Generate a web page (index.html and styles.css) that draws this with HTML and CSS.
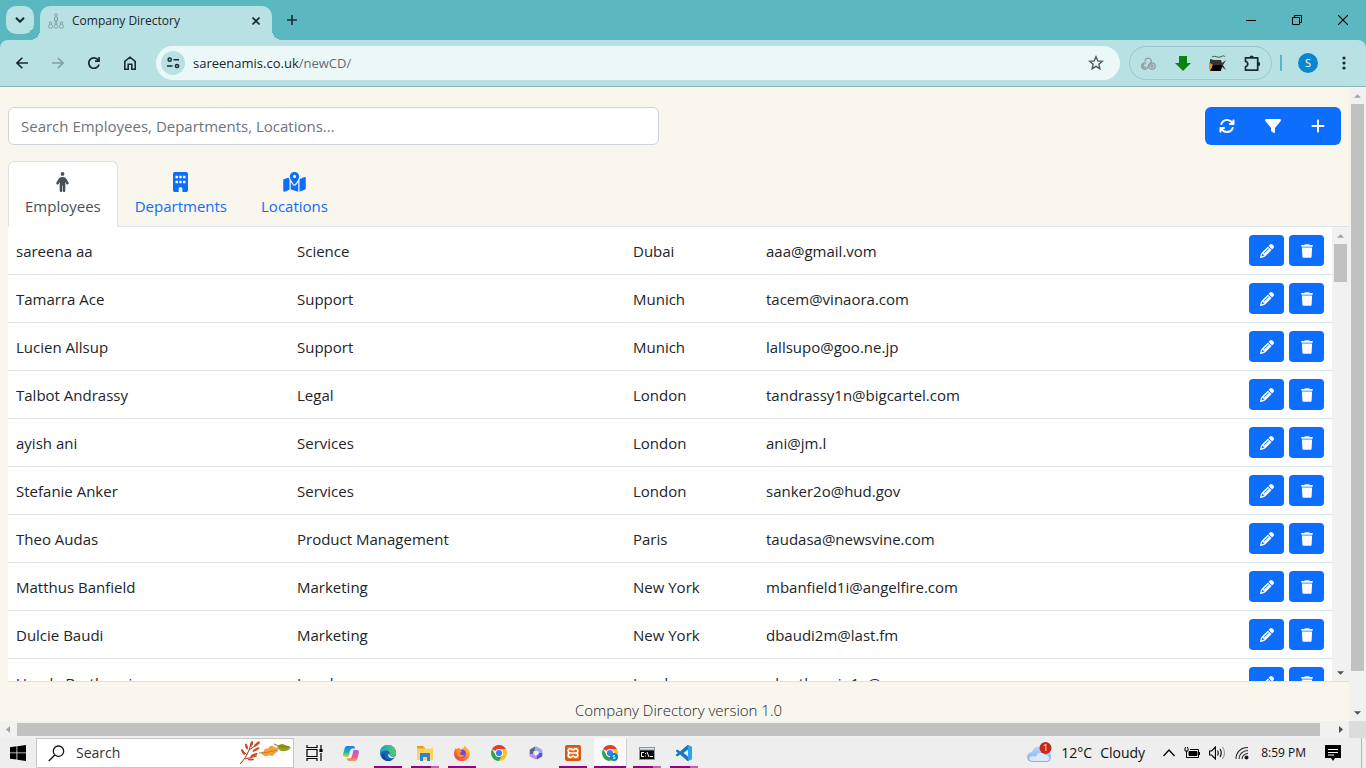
FILE: index.html
```
<!DOCTYPE html>
<html lang="en">
<head>
    <meta charset="UTF-8">
    <meta name="viewport" content="width=device-width, initial-scale=1.0">
    <title>Company Directory</title>
    <link rel="stylesheet" href="styles.css">
</head>
<body>
    <!-- Icons used more than once -->
    <svg class="sprite" width="0" height="0" aria-hidden="true">
        <symbol id="icon-pencil" viewBox="0 0 512 512"><path d="M410.3 231l11.3-11.3-33.9-33.9-62.1-62.1L291.7 89.8l-11.3 11.3-22.6 22.6L58.6 322.9c-10.4 10.4-18 23.3-22.2 37.4L1 480.7c-2.5 8.4-.2 17.5 6.1 23.7s15.3 8.5 23.7 6.1l120.3-35.4c14.1-4.2 27-11.8 37.4-22.2L387.7 253.7 410.3 231zM160 399.4l-9.1 22.7c-4 3.1-8.5 5.4-13.3 6.9L59.4 452l23-78.1c1.4-4.9 3.8-9.4 6.9-13.3l22.7-9.1v32c0 8.8 7.2 16 16 16h32zM362.7 18.7L348.3 33.2 325.7 55.8 314.3 67.1l33.9 33.9 62.1 62.1 33.9 33.9 11.3-11.3 22.6-22.6 14.5-14.5c25-25 25-65.5 0-90.5L453.3 18.7c-25-25-65.5-25-90.5 0zm-47.4 168l-144 144c-6.2 6.2-16.4 6.2-22.6 0s-6.2-16.4 0-22.6l144-144c6.2-6.2 16.4-6.2 22.6 0s6.2 16.4 0 22.6z"/></symbol>
        <symbol id="icon-trash" viewBox="0 0 448 512"><path d="M135.2 17.7L128 32H32C14.3 32 0 46.3 0 64S14.3 96 32 96H416c17.7 0 32-14.3 32-32s-14.3-32-32-32H320l-7.2-14.3C307.4 6.8 296.3 0 284.2 0H163.8c-12.1 0-23.2 6.8-28.6 17.7zM416 128H32L53.2 467c1.6 25.3 22.6 45 47.9 45H346.9c25.3 0 46.3-19.7 47.9-45L416 128z"/></symbol>
        <symbol id="icon-chrome" viewBox="0 0 16 16">
            <path fill="#e33b2e" d="M8 8 1.1 4A8 8 0 0 1 14.9 4L8 4z"/>
            <path fill="#fcc21c" d="M8 4h6.9A8 8 0 0 1 8 16l3.5-6z"/>
            <path fill="#2da44e" d="M1.1 4 4.5 10 8 12l3.5-2L8 16A8 8 0 0 1 1.1 4z"/>
            <circle cx="8" cy="8" r="4" fill="#fff"/><circle cx="8" cy="8" r="3.1" fill="#3b7ded"/>
        </symbol>
        <symbol id="icon-up" viewBox="0 0 8 4"><path d="M0 4 4 0l4 4z"/></symbol>
        <symbol id="icon-down" viewBox="0 0 8 4"><path d="M0 0l4 4 4-4z"/></symbol>
    </svg>

    <header class="titlebar">
        <button class="tab-search" aria-label="Search tabs"><svg width="10" height="6" viewBox="0 0 10 6" fill="none" stroke="#1b2b2d" stroke-width="2"><path d="M1 .8l4 4 4-4"/></svg></button>
        <div class="browser-tab">
            <svg width="16" height="16" viewBox="0 0 16 16" fill="none" stroke="#82a0a3" stroke-width="1">
                <circle cx="8" cy="1.8" r="1.3"/><path d="M6.5 4h3v3.500h-3z"/>
                <circle cx="2.500" cy="9.800" r="1.200"/><circle cx="8" cy="9.800" r="1.200"/><circle cx="13.500" cy="9.800" r="1.200"/>
                <circle cx="2.500" cy="13.300" r="2"/><circle cx="8" cy="13.300" r="2"/><circle cx="13.500" cy="13.300" r="2"/>
            </svg>
            <span class="browser-tab-title">Company Directory</span>
            <button class="plain-btn tab-close" aria-label="Close tab"><svg width="8" height="8" viewBox="0 0 8 8" stroke="#1b2b2d" stroke-width="1.600"><path d="M.5.5l7 7M7.500.5l-7 7"/></svg></button>
        </div>
        <button class="plain-btn new-tab" aria-label="New tab"><svg width="10" height="10" viewBox="0 0 10 10" stroke="#1b2b2d" stroke-width="1.600"><path d="M5 0v10M0 5h10"/></svg></button>
        <div class="window-controls">
            <button class="plain-btn" aria-label="Minimize"><svg width="10" height="10" viewBox="0 0 10 10" stroke="#000"><path d="M0 5.500h10"/></svg></button>
            <button class="plain-btn" aria-label="Restore"><svg width="10" height="10" viewBox="0 0 10 10" fill="none" stroke="#000"><path d="M.5 2.500h7v7h-7zM2.500 2.500v-2h7v7h-2"/></svg></button>
            <button class="plain-btn" aria-label="Close"><svg width="10" height="10" viewBox="0 0 10 10" stroke="#000" stroke-width="1.100"><path d="M0 0l10 10M10 0L0 10"/></svg></button>
        </div>
    </header>

    <nav class="toolbar">
        <div class="nav-buttons">
            <button class="plain-btn" aria-label="Back"><svg width="12" height="12" viewBox="0 0 12 12" fill="none" stroke="#1b2b2d" stroke-width="1.600"><path d="M12 6H1M6.300.700L1 6l5.300 5.300"/></svg></button>
            <button class="plain-btn" aria-label="Forward"><svg width="12" height="12" viewBox="0 0 12 12" fill="none" stroke="#82a0a3" stroke-width="1.600"><path d="M0 6h11M5.700.700L11 6l-5.300 5.300"/></svg></button>
            <button class="plain-btn" aria-label="Reload"><svg width="12" height="12" viewBox="0 0 12 12" fill="none" stroke="#1b2b2d" stroke-width="1.700"><path d="M11 7.500A5.200 5.200 0 1 1 10.200 3M11.100 0v4.200H7"/></svg></button>
            <button class="plain-btn" aria-label="Home"><svg width="14" height="14" viewBox="0 0 14 14" fill="none" stroke="#1b2b2d" stroke-width="1.600"><path d="M1.800 5.300 7 1.200l5.200 4.100v7.900H8.800V8.300H5.200v4.900H1.800z"/></svg></button>
        </div>
        <div class="address-bar">
            <button class="site-info" aria-label="Site information"><svg width="13" height="12" viewBox="0 0 13 12" fill="none" stroke="#1b2b2d" stroke-width="1.500"><circle cx="2.700" cy="2.700" r="1.600"/><path d="M6.500 2.700H12M0 9h5.500"/><circle cx="10" cy="9" r="1.600"/></svg></button>
            <div class="address">sareenamis.co.uk<span class="address-path">/newCD/</span></div>
            <button class="plain-btn bookmark" aria-label="Bookmark this tab"><svg width="16" height="16" viewBox="0 0 16 16" fill="none" stroke="#4c5a5c" stroke-width="1.400"><path d="M8 1.800l1.800 4.100 4.500.4-3.400 3 1 4.400L8 11.400l-3.900 2.300 1-4.400-3.400-3 4.500-.4z"/></svg></button>
        </div>
        <div class="extensions">
            <button class="plain-btn" aria-label="Cloud extension"><svg width="16" height="13" viewBox="0 0 16 13" fill="none" stroke="#929b9d" stroke-width="1.300"><path d="M5 4.500a3.200 3.200 0 1 1 5.500 2L8 9.500"/><path d="M8 9.500a3.200 3.200 0 1 1-1.500-3.200M4.500 7.500a1.500 1.500 0 1 0 1.500 2"/><circle cx="12" cy="9" r="3.200"/><circle cx="12" cy="9" r="1"/></svg></button>
            <button class="plain-btn" aria-label="Download extension"><svg width="16" height="15" viewBox="0 0 16 15" fill="#0c8010"><path d="M4 0h8v7h4l-8 8-8-8h4z"/></svg></button>
            <button class="plain-btn" aria-label="Cat extension"><svg width="17" height="17" viewBox="0 0 17 17"><path fill="#f38a1b" d="M0 7l4 3-3 6-1-2z"/><path fill="#333" d="M1 4l4 1h7l1 3 4-3-3 5 3 5-4-3-1 2H3l1-4-3-2z"/><path fill="#000" d="M4 10h9l-1 6H1z"/><path fill="none" stroke="#555" d="M3 2c3-2 5 1 8 0s4-2 5 0"/></svg></button>
            <button class="plain-btn" aria-label="Extensions"><svg width="17" height="17" viewBox="0 0 17 17"><path fill="none" stroke="#1b2b2d" stroke-width="1.700" stroke-linejoin="round" d="M1.500 2.800h12.200v12.400H1.500v-3.400c3-.6 3-4.800 0-5.400z"/><path fill="#1b2b2d" d="M5.500 2.500a2.100 2.100 0 0 1 4.200 0zM14 6.800a2.200 2.200 0 0 1 0 4.400z"/></svg></button>
        </div>
        <span class="toolbar-divider"></span>
        <button class="profile" aria-label="Profile">S</button>
        <button class="plain-btn more" aria-label="More"><svg width="4" height="14" viewBox="0 0 4 14" fill="#1b2b2d"><circle cx="2" cy="2" r="1.600"/><circle cx="2" cy="7" r="1.600"/><circle cx="2" cy="12" r="1.600"/></svg></button>
    </nav>

    <div class="viewport">
        <main class="page">
            <div class="app-header">
                <input type="text" class="search-input" aria-label="Search directory" placeholder="Search Employees, Departments, Locations...">
                <div class="btn-group">
                    <button class="btn" aria-label="Refresh"><svg width="16" height="16" viewBox="0 0 512 512"><path d="M105.1 202.6c7.7-21.8 20.2-42.3 37.8-59.8c62.5-62.5 163.8-62.5 226.300 0L386.300 160H352c-17.700 0-32 14.300-32 32s14.300 32 32 32H463.900c17.700 0 32-14.300 32-32V80c0-17.700-14.300-32-32-32s-32 14.300-32 32v35.200L414.400 97.600c-87.500-87.500-229.300-87.500-316.800 0C73.200 122 55.600 150.700 44.800 181.400c-5.900 16.700 2.900 34.900 19.500 40.800s34.900-2.900 40.800-19.500zM39 289.300c-5 1.500-9.800 4.200-13.700 8.200c-4 4-6.700 8.800-8.100 14c-.3 1.200-.6 2.500-.8 3.800c-.3 1.700-.4 3.400-.4 5.100V432c0 17.700 14.300 32 32 32s32-14.300 32-32V396.900l17.600 17.500c87.500 87.400 229.300 87.400 316.700 0c24.400-24.400 42.100-53.100 52.900-83.700c5.900-16.700-2.900-34.900-19.500-40.800s-34.900 2.900-40.800 19.500c-7.700 21.800-20.200 42.300-37.800 59.800c-62.500 62.500-163.800 62.500-226.300 0L125.600 352H160c17.700 0 32-14.300 32-32s-14.300-32-32-32H48.400c-1.600 0-3.200.1-4.800.3s-3.100.5-4.600 1z"/></svg></button>
                    <button class="btn" aria-label="Filter"><svg width="16" height="16" viewBox="0 0 512 512"><path d="M3.900 54.900C10.500 40.900 24.500 32 40 32H472c15.500 0 29.500 8.900 36.100 22.900s4.600 30.500-5.200 42.500L320 320.900V448c0 12.100-6.800 23.200-17.700 28.600s-23.800 4.300-33.500-3l-64-48c-8.100-6-12.800-15.500-12.800-25.600V320.900L9 97.300C-.7 85.400-2.800 68.800 3.900 54.900z"/></svg></button>
                    <button class="btn" aria-label="Add"><svg width="14" height="16" viewBox="0 0 448 512"><path d="M256 80c0-17.700-14.300-32-32-32s-32 14.300-32 32V224H48c-17.700 0-32 14.300-32 32s14.300 32 32 32H192V432c0 17.700 14.300 32 32 32s32-14.300 32-32V288H400c17.700 0 32-14.300 32-32s-14.300-32-32-32H256V80z"/></svg></button>
                </div>
            </div>

            <div class="tabs" role="tablist">
                <button class="tab active" role="tab" aria-selected="true">
                    <svg width="13" height="20" viewBox="0 0 320 512"><path d="M112 48a48 48 0 1 1 96 0 48 48 0 1 1 -96 0zm40 304V480c0 17.700-14.300 32-32 32s-32-14.300-32-32V256.900L59.400 304.500c-9.100 15.100-28.800 20-43.900 10.900s-20-28.800-10.900-43.900l58.300-97c17.400-28.900 48.600-46.600 82.300-46.600h29.700c33.700 0 64.900 17.700 82.300 46.600l58.300 97c9.100 15.100 4.200 34.800-10.900 43.900s-34.800 4.200-43.900-10.900L232 256.900V480c0 17.700-14.300 32-32 32s-32-14.300-32-32V352H152z"/></svg>
                    <span>Employees</span>
                </button>
                <button class="tab" role="tab" aria-selected="false">
                    <svg width="15" height="20" viewBox="0 0 384 512"><path fill-rule="evenodd" d="M48 0C21.500 0 0 21.500 0 48V464c0 26.500 21.500 48 48 48h96V432c0-26.500 21.500-48 48-48s48 21.500 48 48v80h96c26.500 0 48-21.500 48-48V48c0-26.500-21.500-48-48-48H48zM64 96h64v64H64zM160 96h64v64h-64zM256 96h64v64h-64zM64 224h64v64H64zM160 224h64v64h-64zM256 224h64v64h-64z"/></svg>
                    <span>Departments</span>
                </button>
                <button class="tab" role="tab" aria-selected="false">
                    <svg width="23" height="20" viewBox="0 0 576 512"><path d="M408 120c0 54.600-73.100 151.900-105.200 192c-7.700 9.600-22 9.600-29.600 0C241.100 271.900 168 174.600 168 120C168 53.700 221.700 0 288 0s120 53.700 120 120zm8 80.400c3.500-6.900 6.700-13.800 9.600-20.600c.5-1.200 1-2.500 1.500-3.700l116-46.400C558.900 123.400 576 135 576 152V422.800c0 9.800-6 18.600-15.100 22.300L416 503V200.400zM137.600 138.300c2.400 14.100 7.200 28.300 12.800 41.500c2.900 6.800 6.100 13.700 9.600 20.600V451.800L32.900 502.700C17.100 509 0 497.400 0 480.400V209.600c0-9.800 6-18.600 15.100-22.300l122.600-49zM327.800 332c13.900-17.400 35.700-45.700 56.200-77V504.300L192 449.400V255c20.500 31.300 42.300 59.600 56.200 77c20.500 25.600 59.100 25.600 79.600 0zM288 152a40 40 0 1 0 0-80 40 40 0 1 0 0 80z"/></svg>
                    <span>Locations</span>
                </button>
            </div>

            <div class="table-wrap">
                <div class="table-scroll">
                    <table class="directory">
                        <colgroup><col class="col-name"><col class="col-department"><col class="col-location"><col><col class="col-actions"></colgroup>
                        <tbody id="employees"></tbody>
                    </table>
                </div>
                <div class="scrollbar">
                    <svg class="muted" width="7" height="4"><use href="#icon-up"/></svg>
                    <div class="thumb thumb-small"></div>
                    <svg class="scroll-end" width="7" height="4"><use href="#icon-down"/></svg>
                </div>
            </div>

            <footer class="app-footer">Company Directory version 1.0</footer>
        </main>
        <div class="scrollbar">
            <svg class="muted" width="7" height="4"><use href="#icon-up"/></svg>
            <div class="thumb thumb-tall"></div>
            <svg class="scroll-end" width="7" height="4"><use href="#icon-down"/></svg>
        </div>
    </div>

    <div class="scrollbar-row">
        <div class="scrollbar-x">
            <svg class="muted" width="4" height="7" viewBox="0 0 4 7"><path d="M4 0v7L0 3.500z"/></svg>
            <div class="thumb-x"></div>
            <svg width="4" height="7" viewBox="0 0 4 7"><path d="M0 0v7l4-3.500z"/></svg>
        </div>
        <div class="scroll-corner"></div>
    </div>

    <footer class="taskbar">
        <button class="plain-btn start" aria-label="Start"><svg width="16" height="16" viewBox="0 0 16 16"><path d="M0 2.200 6.500 1.300v6.200H0zM7.300 1.200 16 0v7.500H7.300zM0 8.300h6.500v6.300L0 13.700zM7.300 8.300H16V16l-8.700-1.300z"/></svg></button>
        <label class="task-search">
            <svg width="17" height="17" viewBox="0 0 17 17" fill="none" stroke="#111" stroke-width="1.300"><circle cx="10.500" cy="6.200" r="5.200"/><path d="M6.800 10 .8 16"/></svg>
            <input type="text" placeholder="Search" aria-label="Search Windows">
            <svg width="52" height="24" viewBox="0 0 52 24">
                <path d="M0 23C5 18 9 11 11 3M5 18l12-3M7 14 2 9M9 9l9-6" fill="none" stroke="#a7391c"/>
                <g fill="#cf4b1e"><ellipse cx="11.500" cy="3" rx="1.400" ry="3" transform="rotate(15 11.500 3)"/><ellipse cx="17" cy="3" rx="3.600" ry="1.400" transform="rotate(-40 17 3)"/><ellipse cx="16" cy="8.500" rx="4" ry="1.200" transform="rotate(-30 16 8.500)"/><ellipse cx="14" cy="14" rx="4" ry="1.200" transform="rotate(-20 14 14)"/><ellipse cx="6.500" cy="5.500" rx="1.200" ry="3.200" transform="rotate(-20 6.500 5.500)"/><ellipse cx="3" cy="11" rx="1.200" ry="3.200" transform="rotate(-30 3 11)"/><ellipse cx="11" cy="18.500" rx="3.200" ry="1.100"/></g>
                <path fill="#f2a03a" d="M21 12c1-2 3-1 3-2 0-2 2-3 4-2 1-3 3-4 5-3 1 2 4 1 6 3-2 0-1 2-1 3-2-1-2 2-4 2-1 3-3 2-5 1-2 2-5 2-8-2z"/><path stroke="#cf7f22" d="M19 12c6 0 11-1 18-3" fill="none"/>
                <path fill="#9a9c1c" d="M37 6c4-4 6-3 8-2l6 2c-2 3-4 4-6 4-4 1-6-1-8-4z"/><path stroke="#747a10" d="M34 3c4 2 9 3 15 3" fill="none"/>
            </svg>
        </label>
        <div class="task-apps">
            <button class="task-app" aria-label="Task view"><svg width="17" height="16" viewBox="0 0 17 16" fill="none" stroke="#000" stroke-width="1.200"><path d="M1 0v2.500h10V0M1 16v-2.500h10V16M1 4.500h10v7H1zM15 0v4M15 8v8"/><path fill="#000" d="M14 4.500h2v2h-2z"/></svg></button>
            <button class="task-app" aria-label="Copilot"><svg width="16" height="15" viewBox="0 0 16 15">
                <defs><linearGradient id="copilot-a" x2="0" y2="1"><stop stop-color="#1a7cf0"/><stop offset=".6" stop-color="#25b9a5"/><stop offset="1" stop-color="#e6d43a"/></linearGradient><linearGradient id="copilot-b" x2="0" y2="1"><stop stop-color="#a95df0"/><stop offset=".6" stop-color="#f0568e"/><stop offset="1" stop-color="#fb9d52"/></linearGradient></defs>
                <path fill="url(#copilot-a)" d="M4 0h6c1.500 0 1.800 1 2.200 2.500H9.500C8 2.500 7.500 3.500 7 5L5.500 11H2C0 11-.3 9.500.3 7.500l1.300-5C2 1 2.700 0 4 0z"/><path fill="url(#copilot-b)" d="M12 15H6c-1.500 0-1.800-1-2.200-2.500h2.700C8 12.500 8.500 11.500 9 10l1.500-6H14c2 0 2.300 1.500 1.700 3.500l-1.300 5C14 14 13.300 15 12 15z"/></svg></button>
            <button class="task-app open" aria-label="Edge"><svg width="16" height="16" viewBox="0 0 16 16"><defs><linearGradient id="edge-a"><stop stop-color="#1b9de2"/><stop offset="1" stop-color="#58d05a"/></linearGradient></defs><circle cx="8" cy="8" r="8" fill="#1467b5"/><path fill="url(#edge-a)" d="M0 8a8 8 0 0 1 16-.5c0 3-2.500 4-4.500 4-2 0-2.500-1-1.800-1.700C11 8 9 5.500 6 5.500 3 5.500 1 7 0 9z"/><path fill="#0c4b91" d="M5 8c-2 5 3 8 8 6.200C10 17 4 16.500 2.500 12.500 2 10 3 8.500 5 8z"/><path fill="#eee" d="M9.600 8.300c-1 1.700.5 3.400 2.800 3.500 1.300 0 2.500-.4 3.200-.8-1.500 2.600-5.400 3-7 .5-.8-1.200-.3-2.800 1-3.200z"/></svg></button>
            <button class="task-app open multi" aria-label="File Explorer"><svg width="16" height="15" viewBox="0 0 16 15"><path fill="#e3a21a" d="M0 0h6l2 2v3H0z"/><path fill="#fbd45f" d="M0 2.500h16V14H0z"/><path fill="#2f83d3" d="M3 7h10v8h-3v-4H6v4H3z"/></svg></button>
            <button class="task-app open" aria-label="Firefox"><svg width="16" height="16" viewBox="0 0 16 16"><defs><linearGradient id="fire-a" x1="1" x2="0" y2="1"><stop stop-color="#ffe23f"/><stop offset=".5" stop-color="#ff8420"/><stop offset="1" stop-color="#ee2452"/></linearGradient></defs><path fill="url(#fire-a)" d="M10.500 0c.5 2 4.500 3.500 5.300 7.500C16.500 12 13 16 8 16S-.3 12.500.1 8C.3 5.500 1 4 2 3l.8 1.500L5 2.200 6 4.500c2.500-.5 4.800-2 4.500-4.500z"/><circle cx="8" cy="8.700" r="3.900" fill="#7543e3"/><path fill="#ff9226" d="M2.500 6c2-1.500 4-1 5.500.3L6 8c0 2 3 3 5 1.500C10 13 5 13 3.500 10z"/></svg></button>
            <button class="task-app" aria-label="Chrome"><svg width="16" height="16"><use href="#icon-chrome"/></svg></button>
            <button class="task-app" aria-label="Microsoft 365"><svg width="14" height="14" viewBox="0 0 14 14" fill="none" stroke-width="3.600" stroke-linejoin="round"><path stroke="#56668f" d="M7 2 2.500 4.600v4.800"/><path stroke="#99a9ed" d="M6 1.900 11.500 4.600V8"/><path stroke="#6252d4" d="M11.500 7v2.400L7 12"/><path stroke="#b993e8" d="M2.500 8v1.400L7.500 12"/></svg></button>
            <button class="task-app open" aria-label="XAMPP"><svg width="16" height="16" viewBox="0 0 16 16"><rect width="16" height="16" rx="2" fill="#ec6b1d"/><rect x="1" y="1" width="14" height="14" rx="1" fill="none" stroke="#b64c0c"/><path fill="none" stroke="#fff" stroke-width="1.700" d="M4.500 3.800c2.500-.6 2.500 1.200 3.500 1.200s1-1.800 3.500-1.200c1.800.5 1.800 3.200 0 4.200 1.800 1 1.800 3.700 0 4.200C9 12.800 9 11 8 11s-1 1.800-3.500 1.200c-1.800-.5-1.800-3.200 0-4.200-1.800-1-1.800-3.700 0-4.200zM5.500 8h5"/></svg></button>
            <button class="task-app open current" aria-label="Chrome, Company Directory"><svg width="16" height="16" viewBox="0 0 16 16"><use href="#icon-chrome"/><circle cx="12" cy="12" r="4" fill="#0a86ce"/><path fill="none" stroke="#a9dbf5" d="M13 10.500h-2V12h2v1.500h-2"/></svg></button>
            <button class="task-app open multi" aria-label="Command Prompt"><svg width="16" height="13" viewBox="0 0 16 13"><path fill="#8e979e" d="M0 0h16v13H0z"/><path fill="#dfe4e8" d="M1 1h14v1.500H1z"/><path d="M1 3.500h14V12H1z"/><path fill="none" stroke="#fff" d="M5 5.500H2.500v4H5M6.500 6v1M6.500 8.500v1M8 5l2 5M11 9.500h3"/></svg></button>
            <button class="task-app open multi" aria-label="Visual Studio Code"><svg width="16" height="16" viewBox="0 0 16 16"><path fill="#1579bd" d="M11.500 0 16 2v12l-4.500 2L4 9.500 1.500 11.500 0 10.600v-1L2 8 0 6.400v-1l1.500-.9L4 6.500zM12 4.500 7.500 8l4.500 3.500z"/><path fill="#2ba3ee" d="M12 0l4 2v12l-4 2z"/></svg></button>
        </div>
        <div class="tray">
            <button class="weather">
                <svg width="26" height="22" viewBox="0 0 26 22"><defs><linearGradient id="cloud-a" x2="0" y2="1"><stop stop-color="#b9d4fb"/><stop offset="1" stop-color="#85b0ee"/></linearGradient></defs><path fill="url(#cloud-a)" d="M5 20a5 5 0 0 1 0-10C7 3 16 3 18 9c8 0 8 11 1 11z"/><path fill="#dce9fd" d="M9 15a5 5 0 0 1 9-2c5 0 6 5 2 6H5c-4-1-3-5 1-5z"/><circle cx="18.500" cy="6" r="6" fill="#c42b1c"/><text x="16" y="9" class="badge-text">1</text></svg>
                <span>12°C</span><span>Cloudy</span>
            </button>
            <svg width="12" height="8" viewBox="0 0 12 8" fill="none" stroke="#000" stroke-width="1.300"><path d="M.5 7 6 1l5.500 6"/></svg>
            <svg width="16" height="12" viewBox="0 0 16 12" fill="none" stroke="#000"><path d="M1 1v3h3V1M1.500 0v1M3.500 0v1M2.500 4v6.500H14.500v-8H6M15.500 5v3"/><path fill="#000" d="M5 4.500h8v4H5z"/></svg>
            <svg width="17" height="14" viewBox="0 0 17 14" fill="none" stroke="#000" stroke-width="1.100"><path d="M.6 5h2l3.800-4v12L2.600 9h-2zM8.500 4.500q1.500 2.500 0 5M11 3q2.500 4 0 8"/><path stroke="#999" d="M13.500 1q4 6 0 12"/></svg>
            <svg width="14" height="14" viewBox="0 0 14 14" fill="none" stroke="#222" stroke-width="1.100"><path d="M1 13C1 6 6 1.500 13 1.500M4 13c0-5 4-8.500 9-8.500M7 13c0-3 3-5.500 6-5.500"/><circle cx="11.500" cy="11.500" r="1.500" fill="#000"/></svg>
            <span class="clock">8:59 PM</span>
            <svg width="16" height="16" viewBox="0 0 16 16"><path d="M0 0h16v13h-6l-2 3-2-3H0z"/><path stroke="#fff" d="M3 4.500h10M3 7.500h10M3 10h6"/></svg>
            <span class="show-desktop"></span>
        </div>
    </footer>

    <script>
        const employees = [
            ['sareena aa', 'Science', 'Dubai', 'aaa@gmail.vom'],
            ['Tamarra Ace', 'Support', 'Munich', 'tacem@vinaora.com'],
            ['Lucien Allsup', 'Support', 'Munich', 'lallsupo@goo.ne.jp'],
            ['Talbot Andrassy', 'Legal', 'London', 'tandrassy1n@bigcartel.com'],
            ['ayish ani', 'Services', 'London', 'ani@jm.l'],
            ['Stefanie Anker', 'Services', 'London', 'sanker2o@hud.gov'],
            ['Theo Audas', 'Product Management', 'Paris', 'taudasa@newsvine.com'],
            ['Matthus Banfield', 'Marketing', 'New York', 'mbanfield1i@angelfire.com'],
            ['Dulcie Baudi', 'Marketing', 'New York', 'dbaudi2m@last.fm'],
            ['Ursula Barthorpin', 'Legal', 'London', 'ubarthorpin1a@cnn.com']
        ];

        document.getElementById('employees').innerHTML = employees.map(row => `
            <tr>
                ${row.map(value => `<td>${value}</td>`).join('')}
                <td>
                    <div class="row-actions">
                        <button class="btn btn-sm" aria-label="Edit ${row[0]}"><svg width="14" height="14"><use href="#icon-pencil"/></svg></button>
                        <button class="btn btn-sm" aria-label="Delete ${row[0]}"><svg width="12" height="14"><use href="#icon-trash"/></svg></button>
                    </div>
                </td>
            </tr>`).join('');
    </script>
</body>
</html>
```
FILE: styles.css
```
* {
    box-sizing: border-box;
}
body {
    margin: 0;
    height: 100vh;
    display: flex;
    flex-direction: column;
    overflow: hidden;
    font-family: "Open Sans", "Noto Sans", sans-serif;
    font-size: 15px;
    line-height: 24px;
    color: #212529;
    background-color: #5bb8c1;
}
button, input {
    font: inherit;
    color: inherit;
}
button {
    border: none;
    padding: 0;
    cursor: pointer;
}
svg {
    display: block;
    flex-shrink: 0;
}
.sprite {
    position: absolute;
}
.plain-btn {
    display: flex;
    align-items: center;
    justify-content: center;
    background: none;
}

/* Browser tab strip */
.titlebar {
    display: flex;
    height: 40px;
    padding: 6px 0 0 6px;
    flex-shrink: 0;
}
.tab-search {
    width: 28px;
    height: 28px;
    display: flex;
    align-items: center;
    justify-content: center;
    border-radius: 10px;
    background-color: #b8e1e4;
}
.browser-tab {
    position: relative;
    display: flex;
    align-items: center;
    width: 232px;
    margin-left: 6px;
    padding: 0 12px 4px 8px;
    gap: 8px;
    border-radius: 10px 10px 0 0;
    background-color: #b8e1e4;
    font-size: 12px;
}
.browser-tab::before,
.browser-tab::after {
    content: "";
    position: absolute;
    bottom: 0;
    width: 10px;
    height: 10px;
}
.browser-tab::before {
    left: -10px;
    background: radial-gradient(circle at 0 0, #5bb8c1 10px, #b8e1e4 10px);
}
.browser-tab::after {
    right: -10px;
    background: radial-gradient(circle at 100% 0, #5bb8c1 10px, #b8e1e4 10px);
}
.browser-tab-title {
    flex: 1;
}
.new-tab {
    width: 28px;
    height: 28px;
    margin-left: 6px;
}
.window-controls {
    display: flex;
    margin-left: auto;
    height: 28px;
}
.window-controls .plain-btn {
    width: 46px;
}

/* Browser toolbar */
.toolbar {
    display: flex;
    align-items: center;
    height: 47px;
    flex-shrink: 0;
    padding: 0 10px 0 4px;
    border-bottom: 1px solid #93b4b7;
    border-radius: 8px 8px 0 0;
    background-color: #b8e1e4;
}
.nav-buttons {
    display: flex;
    width: 152px;
}
.nav-buttons .plain-btn {
    width: 36px;
    height: 34px;
}
.address-bar {
    flex: 1;
    display: flex;
    align-items: center;
    height: 34px;
    padding: 0 12px 0 5px;
    border-radius: 17px;
    background-color: #ecf8f8;
}
.site-info {
    width: 24px;
    height: 24px;
    display: flex;
    align-items: center;
    justify-content: center;
    border-radius: 50%;
    background-color: #b8e1e4;
}
.address {
    flex: 1;
    padding-left: 8px;
    font-size: 13px;
}
.address-path {
    color: #5f6c6e;
}
.bookmark {
    width: 24px;
    height: 24px;
}
.extensions {
    display: flex;
    height: 34px;
    padding-right: 1px;
    margin-left: 9px;
    border: 1px solid #9dc6ca;
    border-radius: 17px;
}
.extensions .plain-btn {
    width: 35px;
}
.toolbar-divider {
    width: 2px;
    height: 16px;
    margin: 0 16px 0 8px;
    background-color: #5bb8c1;
}
.profile {
    width: 20px;
    height: 20px;
    border-radius: 50%;
    background-color: #0a86d0;
    color: #fff;
    font-size: 11px;
    line-height: 20px;
}
.more {
    width: 24px;
    height: 24px;
    margin-left: 14px;
}

/* Page */
.viewport {
    flex: 1;
    display: flex;
    min-height: 0;
    background-color: #f9f6ee;
}
.page {
    flex: 1;
    min-width: 0;
    display: flex;
    flex-direction: column;
    padding: 20px 0 0 8px;
}
.app-header {
    display: flex;
    justify-content: space-between;
    padding-right: 8px;
    margin-bottom: 16px;
}
.search-input {
    width: 651px;
    height: 38px;
    padding: 6px 12px;
    border: 1px solid #ced4da;
    border-radius: 6px;
    background-color: #fff;
}
.search-input::placeholder {
    color: #6c757d;
    opacity: 1;
}
.btn-group {
    display: flex;
    height: 38px;
    border-radius: 6px;
    overflow: hidden;
}
.btn {
    display: flex;
    align-items: center;
    justify-content: center;
    padding: 0 16px 0 14px;
    background-color: #0d6efd;
    color: #fff;
    fill: currentColor;
}
.btn-sm {
    width: 35px;
    height: 31px;
    padding: 0;
    border-radius: 4px;
}
.tabs {
    display: flex;
    flex-shrink: 0;
    height: 66px;
    border-bottom: 1px solid #dee2e6;
}
.tab {
    display: flex;
    flex-direction: column;
    align-items: center;
    height: 66px;
    padding: 10px 16px 0;
    border: 1px solid transparent;
    border-bottom: none;
    border-radius: 6px 6px 0 0;
    background: none;
    color: #0d6efd;
    fill: currentColor;
    gap: 2px;
}
.tab.active {
    border-color: #dee2e6;
    background-color: #fff;
    color: #495057;
}
.table-wrap {
    flex: 1;
    display: flex;
    min-height: 0;
    border-bottom: 1px solid #dee2e6;
    background-color: #fff;
}
.table-scroll {
    flex: 1;
    overflow: hidden;
}
.directory {
    width: 100%;
    table-layout: fixed;
    border-collapse: separate;
    border-spacing: 0;
}
.directory td {
    height: 48px;
    padding: 0 8px;
    vertical-align: middle;
    border-bottom: 1px solid #dee2e6;
}
.col-name {
    width: 281px;
}
.col-department {
    width: 336px;
}
.col-location {
    width: 133px;
}
.col-actions {
    width: 96px;
}
.row-actions {
    display: flex;
    justify-content: flex-end;
    gap: 5px;
}
.app-footer {
    flex-shrink: 0;
    height: 39px;
    padding-top: 16px;
    overflow: hidden;
    text-align: center;
    font-weight: 300;
}

/* Scrollbars */
.scrollbar {
    display: flex;
    flex-direction: column;
    align-items: center;
    width: 17px;
    padding: 7px 2px 6px;
    background-color: #f1f1f1;
    fill: #505050;
}
.muted {
    fill: #a3a3a3;
}
.scroll-end {
    margin-top: auto;
}
.thumb {
    width: 13px;
    margin-top: 6px;
    background-color: #c1c1c1;
}
.thumb-small {
    height: 38px;
}
.thumb-tall {
    height: 567px;
}
.scrollbar-row {
    display: flex;
    flex-shrink: 0;
    height: 17px;
}
.scrollbar-x {
    flex: 1;
    display: flex;
    align-items: center;
    gap: 7px;
    padding: 2px 6px;
    background-color: #f1f1f1;
    fill: #505050;
}
.thumb-x {
    flex: 1;
    height: 13px;
    margin-right: 12px;
    background-color: #c1c1c1;
}
.scroll-corner {
    width: 17px;
    background-color: #dcdcdc;
}

/* Windows taskbar */
.taskbar {
    display: flex;
    flex-shrink: 0;
    height: 30px;
    background-color: #eee;
}
.start {
    width: 36px;
}
.task-search {
    display: flex;
    align-items: center;
    width: 258px;
    padding: 0 1px 0 11px;
    gap: 11px;
    border: 1px solid #c6c6c6;
    background-color: #fff;
}
.task-search input {
    flex: 1;
    min-width: 0;
    padding: 0;
    border: none;
    outline: none;
    font-size: 14px;
}
.task-search input::placeholder {
    color: #333;
    opacity: 1;
}
.task-apps {
    display: flex;
    gap: 5px;
    margin-left: 4px;
}
.task-app {
    display: flex;
    align-items: center;
    justify-content: center;
    width: 32px;
    background: none;
    border: 2px solid transparent;
}
.task-app.open {
    background: linear-gradient(#97008a, #97008a) center bottom / 28px 2px no-repeat border-box;
}
.task-app.multi {
    background: linear-gradient(90deg, #97008a 20px, #c162b8 20px) center bottom / 28px 2px no-repeat border-box;
}
.task-app.current {
    background: linear-gradient(#97008a, #97008a) center bottom / 100% 2px no-repeat border-box, #fafafa;
    box-shadow: 1px 0 #d0d0d0;
}
.tray {
    display: flex;
    align-items: center;
    gap: 9px;
    margin-left: auto;
    padding-right: 4px;
    color: #111;
}
.weather {
    display: flex;
    align-items: center;
    gap: 8px;
    margin-right: 9px;
    background: none;
    font-size: 14px;
}
.badge-text {
    font-size: 9px;
    fill: #fff;
}
.clock {
    margin: 0 10px 0 3px;
    font-size: 12px;
}
.show-desktop {
    width: 1px;
    height: 30px;
    margin-left: 11px;
    background-color: #b5b5b5;
}
```
